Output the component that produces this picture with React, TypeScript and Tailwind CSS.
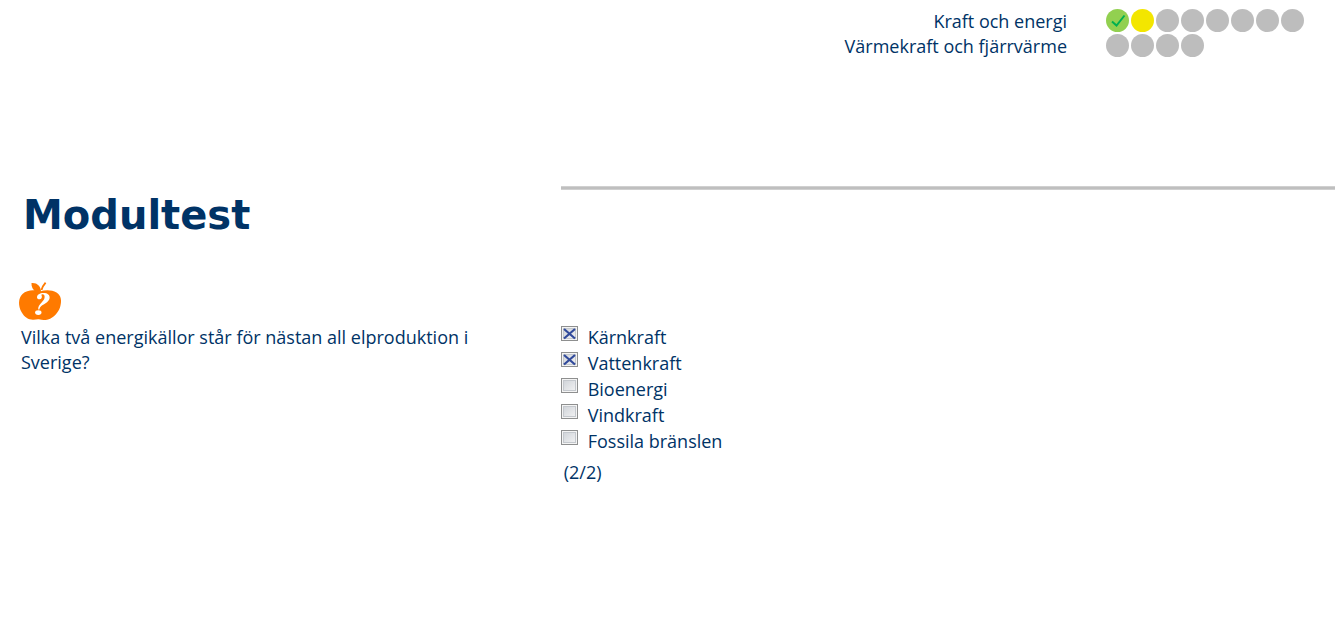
import { useState } from "react";

type Status = "done" | "current" | "pending";

const modules: { name: string; steps: Status[] }[] = [
  {
    name: "Kraft och energi",
    steps: ["done", "current", "pending", "pending", "pending", "pending", "pending", "pending"],
  },
  { name: "Värmekraft och fjärrvärme", steps: ["pending", "pending", "pending", "pending"] },
];

const options = ["Kärnkraft", "Vattenkraft", "Bioenergi", "Vindkraft", "Fossila bränslen"];
const maxChoices = 2;

const stepColors: Record<Status, string> = {
  done: "bg-[#92d050]",
  current: "bg-[#f3e600]",
  pending: "bg-[#bdbdbd]",
};

function StepDot({ status }: { status: Status }) {
  return (
    <li className={`flex size-[23px] items-center justify-center rounded-full ${stepColors[status]}`}>
      {status === "done" && (
        <svg viewBox="0 0 23 23" className="size-full" fill="none" stroke="#00b050" strokeWidth="2">
          <path d="M6 12.5 L10.5 16.5 L18.5 6.5" />
        </svg>
      )}
    </li>
  );
}

function AppleIcon() {
  return (
    <svg viewBox="0 0 44 40" className="h-10 w-11" aria-hidden="true">
      <path
        fill="#ff7a00"
        d="M22 10.5 C17 8.5 9 8.5 4.5 13 C0 17.5 .2 25 3.5 31 C6.5 36.5 11 39 15.5 38.7 C18 38.6 20 38 22 38.6 C24 39 27 39.2 30 38.4 C36 36.8 40 31.5 42 26.5 C44 20 43.300 14.5 38.5 11.5 C34 8.8 27.5 8.6 22 10.5 Z"
      />
      <path fill="#ff7a00" d="M13.5 2 C19 1.500 23 5 23 11 L18 10.800 C15 8.800 13.200 6 13.500 2 Z" />
      <path fill="none" stroke="#ff7a00" strokeWidth="1.800" d="M23.500 9 C24.200 6 25.500 4 27.600 1.600" />
      <path
        fill="#fff"
        d="M19 16.500 C19 13.600 21.800 12 25.500 12 C29.500 12 32 14 31.600 17 C31.200 20.500 27.500 22.400 24.600 24 C22.600 25.200 21.800 26.400 21.400 28.600 L20.200 28.600 C20 25.600 21.400 23.600 23.600 21.400 C25.800 19.200 26.800 17.600 26.600 15.500 C26.500 14 25.700 13.200 24.500 13.200 C23.600 13.200 23.300 13.700 23.600 14.400 C24.400 16.200 23.600 18.300 21.500 18.300 C20 18.300 19 17.600 19 16.500 Z"
      />
      <ellipse cx="20.300" cy="31.600" rx="3.200" ry="2.400" fill="#fff" />
    </svg>
  );
}

export default function App() {
  const [selected, setSelected] = useState<string[]>(["Kärnkraft", "Vattenkraft"]);

  const toggle = (option: string) =>
    setSelected((current) => {
      if (current.includes(option)) return current.filter((item) => item !== option);
      return current.length < maxChoices ? [...current, option] : current;
    });

  return (
    <div className="min-h-screen bg-white font-['Open_Sans',sans-serif] text-lg leading-[25px] text-[#003366]">
      <header className="flex h-[186px] flex-col items-end pt-2">
        {modules.map((module) => (
          <div key={module.name} className="flex h-[25px] items-center gap-[39px]">
            <span className="pt-[2px]">{module.name}</span>
            <ol className="flex w-[229px] gap-[2px]">
              {module.steps.map((status, index) => (
                <StepDot key={index} status={status} />
              ))}
            </ol>
          </div>
        ))}
      </header>

      <div className="grid grid-cols-[42%_1fr]">
        <h1 className="h-[95px] pt-[5px] pl-[23px] font-['DejaVu_Sans',sans-serif] text-[40px] leading-[48px] font-bold">
          Modultest
        </h1>
        <hr className="h-1 border-0 border-y border-[#d0d0d0] bg-[#bfbfbf]" />
      </div>

      <main className="grid grid-cols-[42%_1fr]">
        <section className="pr-20 pl-[18px]">
          <AppleIcon />
          <p id="question" className="pt-1 pl-[3px]">
            Vilka två energikällor står för nästan all elproduktion i Sverige?
          </p>
        </section>

        <section aria-labelledby="question" className="pt-11">
          {options.map((option) => {
            const checked = selected.includes(option);
            return (
              <label key={option} className="flex h-[26px] w-fit items-start gap-[10px]">
                <span className="relative mt-px h-[15px] w-[17px]">
                  <input
                    type="checkbox"
                    checked={checked}
                    onChange={() => toggle(option)}
                    className="block h-[15px] w-[17px] appearance-none border border-[#8e8f8f] bg-linear-to-br from-[#cbcfd5] to-[#f6f6f6] bg-clip-padding shadow-[inset_0_0_0_1px_#f4f4f4,inset_0_0_0_2px_#c4c8cd]"
                  />
                  {checked && (
                    <svg
                      viewBox="0 0 17 15"
                      className="pointer-events-none absolute inset-0"
                      fill="none"
                      stroke="#314a9b"
                      strokeWidth="2.2"
                    >
                      <path d="M3 3 L14 12.5 M14 3 L3 12.5" />
                    </svg>
                  )}
                </span>
                <span>{option}</span>
              </label>
            );
          })}
          <p className="pt-[5px] pl-[3px]">
            ({selected.length}/{maxChoices})
          </p>
        </section>
      </main>
    </div>
  );
}
